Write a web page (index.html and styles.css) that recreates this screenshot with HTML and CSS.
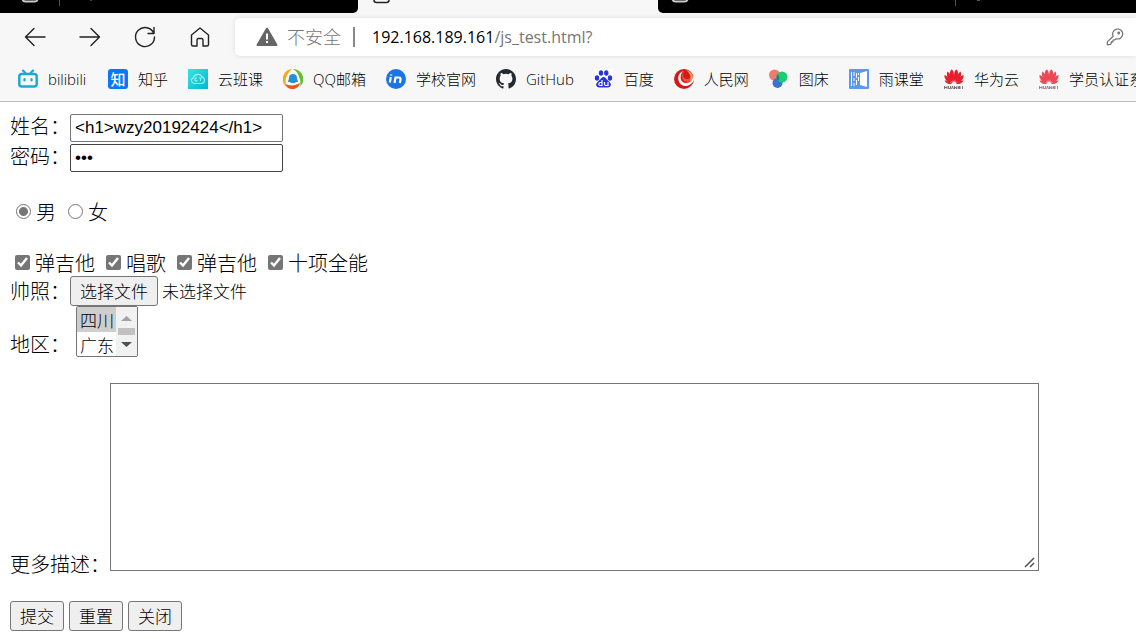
FILE: index.html
```html
<!DOCTYPE html>
<html lang="zh-CN">
<head>
<meta charset="utf-8">
<title>js_test</title>
<link rel="stylesheet" href="styles.css">
</head>
<body>
<header class="browser">
  <div class="tabs">
    <div class="tab tab-left"><svg width="300" height="13" viewBox="0 0 300 13" fill="none"><path d="M22.500 0q1 1.500 3 1.500h9q2 0 3-1.500" stroke="#ccc" stroke-width="2"/><path d="M59.500 0v6" stroke="#555"/><path d="M91 0v1" stroke="#777"/></svg></div>
    <div class="tab tab-active"><svg width="60" height="13" viewBox="0 0 60 13" fill="none"><path d="M16 0q0 2.500 2.500 2.500h10q2.500 0 2.500-2.500" stroke="#222" stroke-width="1.500"/></svg></div>
    <div class="tab tab-right"><svg width="400" height="13" viewBox="0 0 400 13" fill="none"><path d="M14.500 0q1 1.500 3 1.500h9q2 0 3-1.500" stroke="#ccc" stroke-width="2"/><path d="M297.500 0v6" stroke="#555"/><path d="M319 0h3" stroke="#aaa"/></svg></div>
  </div>
  <div class="toolbar">
    <nav class="nav">
      <button class="tool" aria-label="后退"><svg width="24" height="24" viewBox="0 0 24 24"><path d="M22 12H2.500M11 3.500L2.500 12l8.500 8.500"/></svg></button>
      <button class="tool" aria-label="前进"><svg width="24" height="24" viewBox="0 0 24 24"><path d="M2 12h19.500M13 3.500l8.500 8.500-8.500 8.500"/></svg></button>
      <button class="tool" aria-label="刷新"><svg width="24" height="24" viewBox="0 0 24 24"><path d="M20.800 8.500A9.500 9.500 0 1 0 21.500 12M21 2.500v6h-6"/></svg></button>
      <button class="tool" aria-label="主页"><svg width="24" height="24" viewBox="0 0 24 24"><path d="M3.500 10L12 3l8.500 7v9.500q0 1.500-1.500 1.500h-4v-6q0-1.500-1.500-1.500h-3Q9 13.500 9 15v6H5q-1.500 0-1.500-1.500z"/></svg></button>
    </nav>
    <div class="address">
      <svg class="warning" width="22" height="20" viewBox="0 0 22 20"><path d="M11 1.500L20.500 18h-19z" fill="#666" stroke="#666" stroke-width="2" stroke-linejoin="round"/><path d="M11 6.500v6M11 14v2" stroke="#fff" stroke-width="2"/></svg>
      <span class="unsafe">不安全</span>
      <span class="divider"></span>
      <span class="url"><span class="host">192.168.189.161</span>/js_test.html?</span>
      <svg class="key" width="18" height="18" viewBox="0 0 18 18" fill="none" stroke="#707070" stroke-width="1.200"><path d="M7.200 8.200A5 5 0 1 1 10 10.700L8.500 12H7v1.800H5.200v1.700L4 16.700H1.300v-2.800z" stroke-linejoin="round"/><circle cx="12.700" cy="5" r=".8"/></svg>
    </div>
  </div>
  <nav class="bookmarks">
    <a class="bookmark" href="#"><svg width="20" height="20" viewBox="0 0 20 20" fill="none" stroke="#20a8d4" stroke-linecap="round"><rect x="1.300" y="5" width="17.400" height="12.500" rx="2.500" stroke-width="2.500"/><path d="M5 1.500l2.500 2.800M15 1.500l-2.500 2.800" stroke-width="2.200"/><path d="M6.500 10v1.500M13.500 10v1.500" stroke-width="2.200"/></svg>bilibili</a>
    <a class="bookmark" href="#"><span class="zhihu">知</span>知乎</a>
    <a class="bookmark" href="#"><svg width="20" height="20" viewBox="0 0 20 20" fill="none"><defs><linearGradient id="cloud" x2="1" y2="1"><stop stop-color="#36e5df"/><stop offset="1" stop-color="#09b2d5"/></linearGradient></defs><path d="M0 0h20v20H0z" fill="url(#cloud)"/><path d="M6 14.500a3 3 0 0 1-.5-5.800 4.700 4.700 0 0 1 8.700-.7 3.400 3.400 0 0 1-.2 6.500z" stroke="#9cf4f4" stroke-width="1.100"/><path d="M9 9H7v3h2v-1M11 9h3M12.500 9v3" stroke="#9cf4f4"/></svg>云班课</a>
    <a class="bookmark" href="#"><svg width="20" height="20" viewBox="0 0 20 20"><circle cx="10" cy="10" r="8.500" fill="#fff"/><path d="M9 0C3 0-1 6 0 12c0 3 2 4 3 5 0-3-1-4 0-8 1-4 3-6 6-9z" fill="#faa61a"/><path d="M10 0c7 0 11 6 10 12 0 3-2 4-3 5 1-4 0-7-1-9-1-4-3-6-6-8z" fill="#67bd2d"/><path d="M2 15c5 2 10 2 15-1-1 4-4 6-8 6-3 0-6-2-7-5z" fill="#f4511e"/><path d="M10 5a4 4 0 0 0-4 4c0 2-1 2-1 4h2l1 1h4l1-1h2c0-2-1-2-1-4a4 4 0 0 0-4-4z" fill="#278fd5"/></svg>QQ邮箱</a>
    <a class="bookmark" href="#"><svg width="20" height="20" viewBox="0 0 20 20" fill="none"><circle cx="10" cy="10" r="10" fill="#1b73e8"/><path d="M4.800 8l-1 5.500M5.200 5.500v1M8.500 14l1-5.500h3q2.500 0 2 2.300l-.6 3.200" stroke="#fff" stroke-width="2.200"/></svg>学校官网</a>
    <a class="bookmark" href="#"><svg width="20" height="20" viewBox="0 0 16 16"><path fill="#24292e" d="M8 0C3.580 0 0 3.580 0 8c0 3.540 2.290 6.530 5.470 7.590.4.070.55-.17.55-.38 0-.19-.01-.82-.01-1.490-2.010.37-2.530-.49-2.690-.94-.09-.23-.48-.94-.82-1.130-.28-.15-.68-.52-.01-.53.63-.01 1.080.58 1.230.82.72 1.210 1.870.87 2.330.66.07-.52.28-.87.51-1.070-1.780-.2-3.640-.89-3.640-3.950 0-.87.31-1.590.82-2.150-.08-.2-.36-1.020.08-2.120 0 0 .67-.21 2.200.82a7.500 7.500 0 0 1 4 0c1.530-1.040 2.200-.82 2.200-.82.44 1.100.16 1.920.08 2.120.51.56.82 1.270.82 2.150 0 3.070-1.870 3.750-3.650 3.950.29.25.54.73.54 1.480 0 1.070-.01 1.930-.01 2.200 0 .21.15.46.55.38A8 8 0 0 0 16 8c0-4.420-3.580-8-8-8z"/></svg>GitHub</a>
    <a class="bookmark" href="#"><svg width="20" height="20" viewBox="0 0 20 20"><path d="M0 0h19v19H0z" fill="#fff"/><g fill="#2932e1"><ellipse cx="3" cy="9" rx="2.200" ry="2.800"/><ellipse cx="7" cy="4" rx="2.200" ry="2.800"/><ellipse cx="12.300" cy="4" rx="2.200" ry="2.800"/><ellipse cx="16" cy="9" rx="2.200" ry="2.800"/><path d="M9.500 8C7.500 8 7 10 5 11.500 2.500 13.500 1.500 15 2.500 17c1 2 4 1.500 7 1.500s6 .5 7-1.500 0-3.500-2.500-5.500C12 10 11.500 8 9.500 8z"/></g><path d="M8 11v5.500H6.300q-1.500 0-1.500-1.500t1.500-1.500H8M10.500 13v2q0 1.500 1.500 1.500h2V13" fill="none" stroke="#fff" stroke-width="1.200"/></svg>百度</a>
    <a class="bookmark" href="#"><svg width="20" height="20" viewBox="0 0 20 20"><circle cx="10" cy="10" r="10" fill="#d01c18"/><path d="M9 2C2 5 3 16 11 17c4 0 7-2 9-6 0-2 0-3-1-5 0 5-3 8-7 8C6 14 5 7 9 2z" fill="#fff"/><path d="M10 2c-4 4-2 11 3 11 5 0 7-5 4-9 0 4-1 6-4 6-4 0-5-4-3-8z" fill="#ee5140"/><path d="M12 1c7 2 9 8 4 11 2-4 0-8-4-11z" fill="#f9a36a"/></svg>人民网</a>
    <a class="bookmark" href="#"><svg width="20" height="20" viewBox="0 0 20 20"><circle cx="5.500" cy="6" r="5.500" fill="#ef7b70"/><circle cx="8.500" cy="14" r="5" fill="#3974d0"/><circle cx="13" cy="8" r="5.500" fill="#1dcc70"/><path d="M8.500 5a5.500 5.500 0 0 0 1 7.200l1-4z" fill="#168c64"/></svg>图床</a>
    <a class="bookmark" href="#"><svg width="20" height="20" viewBox="0 0 20 20" fill="none"><rect width="20" height="20" rx="1" fill="#5c98ef"/><path d="M11 4l7-2v16l-7-2z" fill="#fff"/><path d="M2.500 3v14M5 3v4M5 9v3M5 14v3M7.500 4v5M7.500 11v5M9.500 4v2M9.500 8v4" stroke="#fff"/></svg>雨课堂</a>
    <a class="bookmark" href="#"><svg width="20" height="20" viewBox="0 0 20 20"><g id="petals" fill="#e91e2c"><path d="M9.700 13C5 8 5 3 7.500.5 10 1 10.500 7 9.700 13z"/><path d="M10.300 13C15 8 15 3 12.500.5 10 1 9.500 7 10.300 13z"/><path d="M9 13.500C3 9 2 6 3.500 2.500 6 4 8 9 9 13.500z"/><path d="M11 13.500c6-4.500 7-7.500 5.500-11C14 4 12 9 11 13.500z"/><path d="M8.500 14C3 13 0 10 .5 6 4 7 7 11 8.500 14z"/><path d="M11.500 14c5.500-1 8.500-4 8-8-3.500 1-6.500 5-8 8z"/><path d="M8 14.500c-3 1.500-6 0-7.500-3C3 11 6 12.500 8 14.500zM12 14.500c3 1.500 6 0 7.500-3-2.500-.5-5.500 1-7.500 3z"/></g><path id="brand" d="M.5 17v3M3 17v3M.5 18.500H3M4.500 17v2.500h2V17M7.500 20l1-3 1 3M10.500 17v3l1.200-2 1.200 2v-3M16.500 17.500h-2v2h2M14.500 18.500h2M18.500 17v3" fill="none" stroke="#63575a" stroke-width=".8"/></svg>华为云</a>
    <a class="bookmark" href="#"><svg width="20" height="20" viewBox="0 0 20 20" opacity=".8"><use href="#petals"/><use href="#brand"/></svg>学员认证系统</a>
  </nav>
</header>
<main>
  <form class="form">
    <div class="row"><label class="field-label" for="name">姓名：</label><input class="text" id="name" type="text" value="&lt;h1&gt;wzy20192424&lt;/h1&gt;"></div>
    <div class="row"><label class="field-label" for="password">密码：</label><input class="text password" id="password" type="password" value="123"></div>
    <div class="row choices radios">
      <label class="choice"><input type="radio" name="sex" checked>男</label>
      <label class="choice"><input type="radio" name="sex">女</label>
    </div>
    <div class="row choices checks">
      <label class="choice"><input type="checkbox" checked>弹吉他</label>
      <label class="choice"><input type="checkbox" checked>唱歌</label>
      <label class="choice"><input type="checkbox" checked>弹吉他</label>
      <label class="choice"><input type="checkbox" checked>十项全能</label>
    </div>
    <div class="row"><label for="photo">帅照：</label><input id="photo" type="file" hidden><button class="button" type="button">选择文件</button><span class="filename">未选择文件</span></div>
    <div class="row region"><label for="region">地区：</label>
      <span class="listbox">
        <select id="region" size="2"><option selected>四川</option><option>广东</option></select>
        <svg class="scrollbar" width="21" height="49" viewBox="0 0 21 49"><path d="M0 0h21v49H0z" fill="#f1f1f1"/><path d="M5 14l5.500-5 5.500 5z" fill="#a3a3a3"/><path d="M2 21h17v7H2z" fill="#c1c1c1"/><path d="M5 35h11l-5.500 5z" fill="#505050"/></svg>
      </span>
    </div>
    <div class="row description"><label for="more">更多描述：</label><textarea id="more"></textarea></div>
    <div class="row actions"><button class="button" type="submit">提交</button><button class="button" type="reset">重置</button><button class="button" type="button">关闭</button></div>
  </form>
</main>
</body>
</html>
```
FILE: styles.css
```css
* { box-sizing: border-box; }
body { margin: 0; overflow: hidden; background: #fff; color: #000; font: 300 20px/26px "Noto Sans CJK SC", sans-serif; }
button, input, select, textarea { margin: 0; font: inherit; color: inherit; }
svg { display: block; flex: none; }

.browser { background: #f7f7f7; border-bottom: 1px solid #bbb; }
.tabs { display: grid; grid-template-columns: 358px 300px 1fr; height: 13px; background: #f7f7f7; }
.tab { overflow: hidden; background: #000; }
.tab-left { border-bottom-right-radius: 5px; }
.tab-active { background: #f7f7f7; }
.tab-right { border-bottom-left-radius: 5px; }
.toolbar { display: flex; align-items: center; height: 47px; overflow: hidden; }
.nav { display: flex; gap: 31px; padding: 0 23px; }
.tool { padding: 0; border: 0; background: none; }
.tool svg { fill: none; stroke: #222; stroke-width: 1.4; stroke-linejoin: round; stroke-linecap: round; }
.address { display: flex; flex: 1; align-items: center; height: 38px; padding: 0 12px 0 21px; border-radius: 5px 0 0 5px; background: #fff; box-shadow: 0 0 5px #ddd; color: #767676; font-size: 18px; }
.unsafe { margin-left: 9px; line-height: 24px; padding-bottom: 2px; }
.divider { width: 2px; height: 20px; margin: 0 17px 0 12px; background: #888; }
.url { font: 400 16px/24px "Open Sans", sans-serif; }
.host { color: #000; }
.key { margin-left: auto; }
.bookmarks { display: flex; gap: 20px; height: 41px; padding: 0 18px 4px; align-items: center; overflow: hidden; font: 300 15px/20px "Open Sans", "Noto Sans CJK SC", sans-serif; }
.bookmark { display: flex; flex: none; gap: 10px; align-items: center; color: #000; text-decoration: none; white-space: nowrap; }
.bookmark:first-child { min-width: 70px; }
.zhihu { width: 20px; height: 20px; border-radius: 3px; background: #0877fa; color: #fff; text-align: center; font-weight: 500; }

.form { padding: 11px 10px; }
.row { display: flex; align-items: center; min-height: 30px; }
.field-label { padding-bottom: 4px; }
.text { width: 213px; height: 28px; padding: 1px 4px; border: 1px solid #767676; border-radius: 2px; font: 17px/22px "Liberation Sans", sans-serif; }
.password { border-color: #444; }
.choices { min-height: 26px; padding-left: 5px; gap: 11px; }
.radios { margin-top: 26px; padding-left: 6px; gap: 12px; }
.checks { margin-top: 25px; }
.choice { display: flex; align-items: center; gap: 5px; }
.choice input { width: 15px; height: 15px; margin-bottom: 2px; accent-color: #767676; }
.choice input[type="radio"] { appearance: none; border: 1px solid #767676; border-radius: 50%; }
.choice input[type="radio"]:checked { background: radial-gradient(circle, #767676 4px, #fff 5px); }
.button { height: 30px; padding: 0 9px; border: 1px solid #767676; border-radius: 3px; background: #efefef; font-size: 17px; line-height: 26px; }
.filename { margin-left: 4px; font-size: 17px; }
.region { align-items: flex-end; }
.listbox { position: relative; margin-left: 6px; }
.listbox select { display: block; width: 62px; height: 51px; padding: 0; overflow: hidden; border: 1px solid #767676; border-radius: 2px; background: #fff; font-size: 17px; }
.listbox option { min-height: 24px; padding: 0 3px; font-weight: 300; line-height: 24px; }
.listbox option:checked { background: #cecece; color: #000; }
.scrollbar { position: absolute; top: 1px; right: 1px; pointer-events: none; }
.description { align-items: flex-end; margin-top: 26px; padding-right: 87px; }
.description label { flex: none; line-height: 14px; }
.description textarea { flex: 1; height: 188px; border: 1px solid #767676; border-radius: 0; }
.description textarea::-webkit-resizer { background: url("data:image/svg+xml,%3Csvg xmlns='http://www.w3.org/2000/svg' width='15' height='15'%3E%3Cpath d='M2 12L11 3M7 12l4-4' stroke='%23505050' stroke-width='1.5'/%3E%3C/svg%3E") no-repeat; }
.actions { margin-top: 30px; gap: 5px; }
```
